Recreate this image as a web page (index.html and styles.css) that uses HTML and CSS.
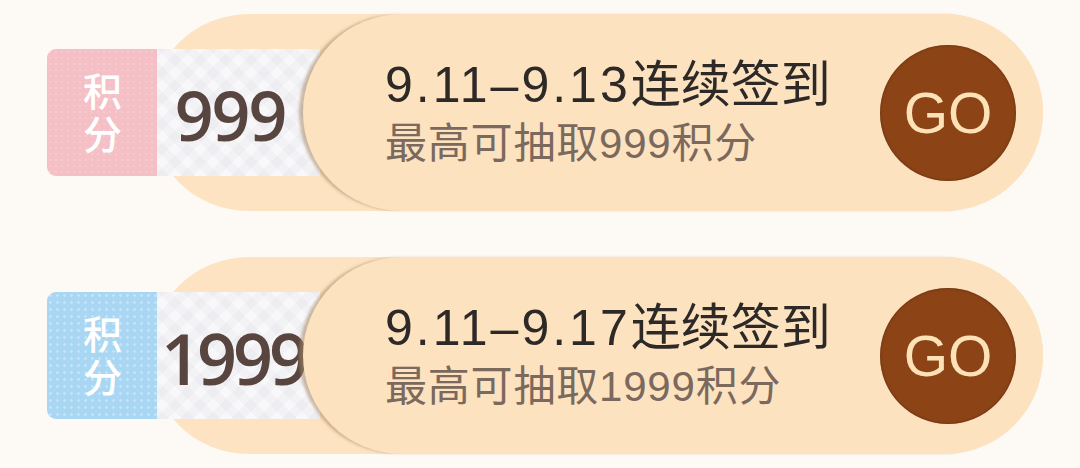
FILE: index.html
```html
<!DOCTYPE html>
<html lang="zh-CN">
<head>
<meta charset="utf-8">
<title>连续签到</title>
<link rel="stylesheet" href="styles.css">
</head>
<body>
<div class="list">
  <div class="row">
    <div class="tag tag-pink"><span class="tag-text">积分</span></div>
    <div class="track">
      <div class="score"><span class="num">999</span></div>
      <div class="card">
        <div class="info">
          <div class="title"><span class="date">9.11–9.13</span>连续签到</div>
          <div class="sub">最高可抽取999积分</div>
        </div>
        <div class="go">GO</div>
      </div>
    </div>
  </div>
  <div class="row">
    <div class="tag tag-blue"><span class="tag-text">积分</span></div>
    <div class="track">
      <div class="score"><span class="num num-4">1999</span></div>
      <div class="card">
        <div class="info">
          <div class="title"><span class="date">9.11–9.17</span>连续签到</div>
          <div class="sub">最高可抽取1999积分</div>
        </div>
        <div class="go">GO</div>
      </div>
    </div>
  </div>
</div>
</body>
</html>
```

FILE: styles.css
```css
html, body {
  margin: 0;
  padding: 0;
}
body {
  background: #fdf9f5;
  width: 1080px;
  height: 468px;
  overflow: hidden;
  font-family: "Liberation Sans", "Noto Sans CJK SC", sans-serif;
}
.list {
  display: flex;
  flex-direction: column;
  gap: 46px;
  padding-top: 14px;
  padding-left: 47px;
}
.row {
  display: flex;
  align-items: center;
  width: 996px;
  height: 197px;
}
.tag {
  position: relative;
  z-index: 2;
  flex: none;
  width: 110px;
  height: 127px;
  border-radius: 9px 0 0 9px;
  display: flex;
  align-items: center;
  justify-content: center;
}
.tag-text {
  writing-mode: vertical-rl;
  text-orientation: upright;
  color: #ffffff;
  font-family: "Noto Sans CJK SC", sans-serif;
  font-weight: 500;
  font-size: 39px;
  line-height: 1;
  letter-spacing: 4px;
  margin-top: 4px;
}
.tag-pink {
  background-color: #f4c0c6;
  background-image: radial-gradient(rgba(255,255,255,0.18) 1px, transparent 1.5px);
  background-size: 6px 6px;
}
.tag-blue {
  background-color: #a8d6f3;
  background-image: radial-gradient(rgba(255,255,255,0.35) 1px, transparent 1.6px);
  background-size: 7px 7px;
}
.track {
  flex: 1;
  height: 197px;
  margin-left: -7px;
  border-radius: 99px;
  background: #fde3c1;
  display: flex;
  align-items: center;
}
.score {
  flex: none;
  width: 146px;
  padding-right: 17px;
  height: 127px;
  margin-left: 7px;
  display: flex;
  align-items: center;
  justify-content: center;
  background-color: #f8f8fa;
  background-image:
    repeating-linear-gradient(45deg, rgba(120,120,140,0.045) 0 9px, transparent 9px 18px),
    repeating-linear-gradient(-45deg, rgba(120,120,140,0.045) 0 9px, transparent 9px 18px);
}
.num {
  font-family: "Open Sans", sans-serif;
  font-weight: 600;
  font-size: 68px;
  line-height: 1;
  color: #584540;
  letter-spacing: -2px;
  padding-top: 4px;
}
.num-4 {
  font-size: 70px;
  letter-spacing: -4px;
  padding-left: 6px;
}
.card {
  flex: 1;
  height: 197px;
  margin-left: -17px;
  border-radius: 99px;
  background: #fde2c0;
  box-shadow: -5px 0 3px -1px rgba(165, 135, 100, 0.55);
  display: flex;
  align-items: center;
  justify-content: space-between;
  padding-left: 82px;
  padding-right: 27px;
  position: relative;
  z-index: 1;
}
.info {
  display: flex;
  flex-direction: column;
}
.title {
  font-size: 50px;
  line-height: 56px;
  color: #2d2926;
  white-space: nowrap;
}
.date {
  letter-spacing: 3px;
}
.sub {
  margin-top: 6px;
  font-size: 42px;
  line-height: 50px;
  color: #7a695c;
  white-space: nowrap;
  letter-spacing: 0.8px;
}
.go {
  flex: none;
  width: 136px;
  height: 136px;
  border-radius: 50%;
  background: #8c4417;
  box-shadow: inset 0 0 3px rgba(60, 25, 5, 0.6);
  display: flex;
  align-items: center;
  justify-content: center;
  color: #fde2b8;
  font-family: "Liberation Sans", sans-serif;
  font-weight: 400;
  font-size: 57px;
}
```
